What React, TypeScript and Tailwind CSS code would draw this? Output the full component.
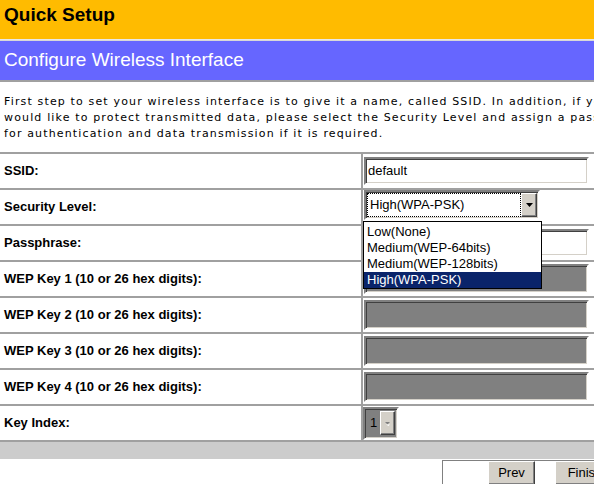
export default function App() {
  const rows = [
    'WEP Key 1 (10 or 26 hex digits):',
    'WEP Key 2 (10 or 26 hex digits):',
    'WEP Key 3 (10 or 26 hex digits):',
    'WEP Key 4 (10 or 26 hex digits):',
  ];
  const inset =
    'border-2 border-t-[#808080] border-l-[#808080] border-b-[#ffffff] border-r-[#ffffff] shadow-[inset_1px_1px_0_#404040,inset_-1px_-1px_0_#d4d0c8]';
  const raised =
    'bg-[#d4d0c8] border border-t-[#ffffff] border-l-[#ffffff] border-b-[#404040] border-r-[#404040] shadow-[inset_-1px_-1px_0_#808080]';

  return (
    <div className="w-[594px] h-[484px] overflow-hidden bg-white font-['Liberation_Sans',Arial,sans-serif]">
      <div className="w-[640px]">
        {/* title bars */}
        <div className="h-[40px] bg-[#ffbb00] px-[4px] pt-[3px] text-[19px] font-bold text-black leading-[24px] border-b border-[#e8e8e8]">
          Quick Setup
        </div>
        <div className="h-[42px] bg-[#6666ff] px-[4px] flex items-center text-[19px] text-white border-b-2 border-[#a0a0a0] border-t border-t-[#d8d8d8]">
          Configure Wireless Interface
        </div>

        {/* description */}
        <div className="pt-[12px] pb-[10px] px-[4px] font-['DejaVu_Sans',Verdana,sans-serif] text-[11px] leading-[16px] tracking-[1.15px] text-black whitespace-nowrap">
          First step to set your wireless interface is to give it a name, called SSID. In addition, if you
          <br />
          would like to protect transmitted data, please select the Security Level and assign a passphrase
          <br />
          for authentication and data transmission if it is required.
        </div>

        {/* form table */}
        <div className="border-b-2 border-[#a0a0a0]">
          <div className="grid grid-cols-[363px_1fr] h-[36px] border-t-2 border-[#a0a0a0]">
            <div className="border-r-2 border-[#a0a0a0] flex items-center px-[4px] text-[13px] font-bold">SSID:</div>
            <div className="flex items-center pl-[1px]">
              <div className={`w-[225px] h-[28px] bg-white ${inset} flex items-center px-[2px] text-[13px]`}>default</div>
            </div>
          </div>

          <div className="grid grid-cols-[363px_1fr] h-[36px] border-t-2 border-[#a0a0a0]">
            <div className="border-r-2 border-[#a0a0a0] flex items-center px-[4px] text-[13px] font-bold">Security Level:</div>
            <div className="relative pl-[1px]">
              <div className={`w-[176px] h-[30px] bg-white ${inset} flex items-stretch p-[1px]`}>
                <div className="flex-1 border border-dotted border-black flex items-center px-[2px] text-[13px]">High(WPA-PSK)</div>
                <div className={`w-[16px] ${raised} flex items-center justify-center`}>
                  <svg width="7" height="4" viewBox="0 0 7 4">
                    <path d="M0 0h7L3.5 4z" fill="#000" />
                  </svg>
                </div>
              </div>
              <div className="absolute left-[0px] top-[31px] z-10 w-[179px] bg-white border border-black text-[13px] leading-[16px]">
                <div className="px-[3px] pt-[2px]">Low(None)</div>
                <div className="px-[3px]">Medium(WEP-64bits)</div>
                <div className="px-[3px]">Medium(WEP-128bits)</div>
                <div className="px-[3px] bg-[#0a246a] text-white">High(WPA-PSK)</div>
              </div>
            </div>
          </div>

          <div className="grid grid-cols-[363px_1fr] h-[36px] border-t-2 border-[#a0a0a0]">
            <div className="border-r-2 border-[#a0a0a0] flex items-center px-[4px] text-[13px] font-bold">Passphrase:</div>
            <div className="flex items-center pl-[1px]">
              <div className={`w-[225px] h-[28px] bg-white ${inset}`} />
            </div>
          </div>

          {rows.map((label) => (
            <div key={label} className="grid grid-cols-[363px_1fr] h-[36px] border-t-2 border-[#a0a0a0]">
              <div className="border-r-2 border-[#a0a0a0] flex items-center px-[4px] text-[13px] font-bold">{label}</div>
              <div className="flex items-center pl-[1px]">
                <div className={`w-[225px] h-[30px] bg-[#808080] ${inset}`} />
              </div>
            </div>
          ))}

          <div className="grid grid-cols-[363px_1fr] h-[36px] border-t-2 border-[#a0a0a0]">
            <div className="border-r-2 border-[#a0a0a0] flex items-center px-[4px] text-[13px] font-bold">Key Index:</div>
            <div className="flex items-center">
              <div className={`w-[36px] h-[33px] bg-[#808080] ${inset} flex items-center p-[2px]`}>
                <span className="flex-1 pl-[3px] text-[13px]">1</span>
                <div className={`w-[15px] h-[24px] ${raised} flex items-center justify-center`}>
                  <svg width="7" height="5" viewBox="0 0 7 5">
                    <path d="M1 1h5L3.5 3.5z" fill="#808080" />
                    <path d="M2 3.5h4L4.5 5z" fill="#fff" />
                  </svg>
                </div>
              </div>
            </div>
          </div>
        </div>

        {/* gray band */}
        <div className="h-[17px] bg-[#cccccc]" />

        {/* buttons */}
        <div className="flex pt-[1px]">
          <div className="w-[442px]" />
          <div className="flex-1 h-[30px] border-l border-t border-[#808080] flex items-start gap-[20px] pl-[45px]">
            <button className={`w-[47px] h-[24px] ${raised} text-[13px]`}>Prev</button>
            <button className={`w-[60px] h-[24px] ${raised} text-[13px]`}>Finish</button>
          </div>
        </div>
      </div>
    </div>
  );
}
